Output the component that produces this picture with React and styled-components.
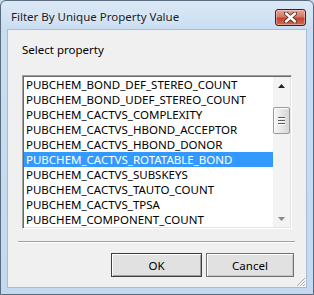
import styled, { createGlobalStyle } from "styled-components"

const GlobalStyle = createGlobalStyle`
  html, body {
    margin: 0;
    padding: 0;
    background: #c5daf0;
  }
  * { box-sizing: border-box; }
`;

const properties = [
  "PUBCHEM_BOND_DEF_STEREO_COUNT",
  "PUBCHEM_BOND_UDEF_STEREO_COUNT",
  "PUBCHEM_CACTVS_COMPLEXITY",
  "PUBCHEM_CACTVS_HBOND_ACCEPTOR",
  "PUBCHEM_CACTVS_HBOND_DONOR",
  "PUBCHEM_CACTVS_ROTATABLE_BOND",
  "PUBCHEM_CACTVS_SUBSKEYS",
  "PUBCHEM_CACTVS_TAUTO_COUNT",
  "PUBCHEM_CACTVS_TPSA",
  "PUBCHEM_COMPONENT_COUNT",
]

const App = () => {
  const selected = "PUBCHEM_CACTVS_ROTATABLE_BOND"

  return (
    <>
      <GlobalStyle />
      <Ventana>
        <BarraTitulo>
          <Titulo>Filter By Unique Property Value</Titulo>
          <BotonCerrar>
            <svg width="13" height="11" viewBox="0 0 13 11">
              <path d="M2 1.5 L11 9.5 M11 1.5 L2 9.5" stroke="#5a2a24" strokeWidth="4.2" strokeLinecap="round" />
              <path d="M2 1.5 L11 9.5 M11 1.5 L2 9.5" stroke="#fff" strokeWidth="2.4" strokeLinecap="round" />
            </svg>
          </BotonCerrar>
        </BarraTitulo>
        <Cliente>
          <Etiqueta>Select property</Etiqueta>
          <Lista>
            <Items>
              {properties.map(p => (
                <Item key={p} $activo={p === selected}>{p}</Item>
              ))}
            </Items>
            <Scroll>
              <Flecha>
                <svg width="7" height="4" viewBox="0 0 7 4"><path d="M0 4 L3.5 0 L7 4 Z" fill="#222" /></svg>
              </Flecha>
              <Pista>
                <Pulgar>
                  <Agarre />
                  <Agarre />
                  <Agarre />
                </Pulgar>
              </Pista>
              <Flecha>
                <svg width="7" height="4" viewBox="0 0 7 4"><path d="M0 0 L7 0 L3.5 4 Z" fill="#888" /></svg>
              </Flecha>
            </Scroll>
          </Lista>
          <Separador />
          <Botones>
            <Boton $principal $ancho={91}>OK</Boton>
            <Boton $ancho={88}>Cancel</Boton>
          </Botones>
          <Redimensionar>
            <svg width="11" height="11" viewBox="0 0 11 11">
              <path d="M10 2 L2 10 M10 5 L5 10 M10 8 L8 10" stroke="#a9a9a9" strokeWidth="1" />
              <path d="M11 3 L3 11 M11 6 L6 11 M11 9 L9 11" stroke="#fff" strokeWidth="1" />
            </svg>
          </Redimensionar>
        </Cliente>
      </Ventana>
    </>
  )
}

const Ventana = styled.div`
  width: 314px;
  height: 295px;
  display: flex;
  flex-direction: column;
  border: 1px solid #5b6b7e;
  border-radius: 6px 6px 0 0;
  background: linear-gradient(to bottom, #dce9f6 0px, #c9ddf2 28px, #c4d9f0 100%);
  font-family: "Noto Sans", "Open Sans", sans-serif;
  font-size: 11.5px;
  color: #000;
`;

const BarraTitulo = styled.div`
  height: 28px;
  display: flex;
  align-items: flex-start;
  justify-content: space-between;
  padding: 8px 7px 0 10px;
`;

const Titulo = styled.span`
  font-size: 11.5px;
  line-height: 16px;
  color: #1a1a2a;
  text-shadow: 0 0 6px rgba(255,255,255,.9);
`;

const BotonCerrar = styled.div`
  width: 31px;
  height: 17px;
  border: 1px solid #4f1c17;
  border-radius: 3px;
  display: flex;
  align-items: center;
  justify-content: center;
  background: linear-gradient(to bottom, #e8a493 0%, #d47965 45%, #c3452e 55%, #cf6a52 100%);
  box-shadow: inset 0 0 0 1px rgba(255,255,255,.35);
`;

const Cliente = styled.div`
  position: relative;
  flex: 1;
  margin: 0 6px 6px 6px;
  border: 1px solid #a9bcd2;
  background: #f0f0f0;
  padding: 0 0 0 14px;
  display: flex;
  flex-direction: column;
`;

const Etiqueta = styled.div`
  margin-top: 12px;
  line-height: 16px;
  height: 16px;
`;

const Lista = styled.div`
  margin-top: 17px;
  width: 270px;
  height: 154px;
  display: flex;
  background: #fff;
  border-top: 1px solid #a0a0a0;
  border-left: 1px solid #a0a0a0;
  border-right: 1px solid #fff;
  border-bottom: 1px solid #fff;
  box-shadow: inset 1px 1px 0 #696969, inset -1px -1px 0 #e3e3e3;
  padding: 1px;
`;

const Items = styled.div`
  flex: 1;
  display: flex;
  flex-direction: column;
  overflow: hidden;
`;

const Item = styled.div`
  height: 15px;
  line-height: 15px;
  padding-left: 2px;
  white-space: nowrap;
  background: ${p => p.$activo ? "#3399ff" : "transparent"};
  color: ${p => p.$activo ? "#fff" : "#000"};
`;

const Scroll = styled.div`
  width: 17px;
  display: flex;
  flex-direction: column;
  background: #f3f3f3;
  background-image: radial-gradient(#e2e2e2 0.6px, transparent 0.7px);
  background-size: 2px 2px;
`;

const Flecha = styled.div`
  height: 17px;
  display: flex;
  align-items: center;
  justify-content: center;
`;

const Pista = styled.div`
  flex: 1;
  padding-top: 13px;
`;

const Pulgar = styled.div`
  width: 17px;
  height: 27px;
  border: 1px solid #9a9a9a;
  border-radius: 2px;
  background: linear-gradient(to right, #f6f6f6, #e4e4e4 60%, #d6d6d6);
  box-shadow: inset 1px 1px 0 #fff;
  display: flex;
  flex-direction: column;
  align-items: center;
  justify-content: center;
  gap: 2px;
`;

const Agarre = styled.div`
  width: 7px;
  height: 1px;
  background: #5c5c5c;
  box-shadow: 0 1px 0 #fff;
`;

const Separador = styled.div`
  margin: 12px 11px 0 -4px;
  height: 2px;
  border-top: 1px solid #a0a0a0;
  border-bottom: 1px solid #fff;
`;

const Botones = styled.div`
  margin-top: 10px;
  display: flex;
  gap: 4px;
  padding-left: 89px;
`;

const Boton = styled.div`
  width: ${p => p.$ancho}px;
  height: 24px;
  display: flex;
  align-items: center;
  justify-content: center;
  border: 1px solid ${p => p.$principal ? "#3c3c3c" : "#707070"};
  background: #e1e1e1;
  box-shadow: inset 1px 1px 0 #fff, inset -1px -1px 0 ${p => p.$principal ? "#a0a0a0" : "#c8c8c8"};
  color: #000;
`;

const Redimensionar = styled.div`
  position: absolute;
  right: 0;
  bottom: 0;
  width: 11px;
  height: 11px;
  display: flex;
`;

export default App
